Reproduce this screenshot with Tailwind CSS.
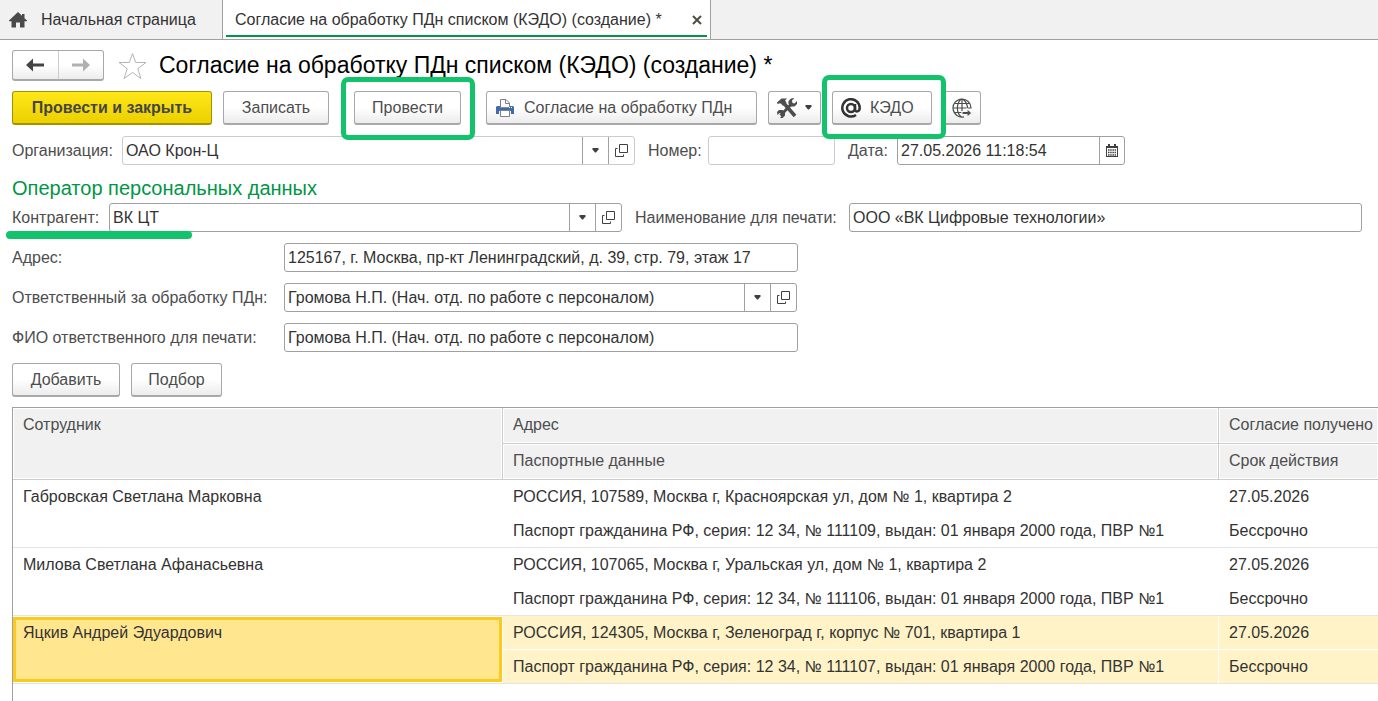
<!DOCTYPE html>
<html lang="ru">
<head>
    <meta charset="UTF-8">
    <meta name="viewport" content="width=device-width, initial-scale=1.0">
    <title>Согласие на обработку ПДн списком (КЭДО)</title>
    <script src="https://cdn.jsdelivr.net/npm/@tailwindcss/browser@4"></script>
</head>
<body class="bg-white text-[#333333] text-[16px] leading-5 font-['Liberation_Sans',Arial,sans-serif]">

    <!-- Icons shared by the combo boxes -->
    <svg class="hidden">
        <symbol id="icon-down" viewBox="0 0 7 5">
            <path d="M.5 0h6v1.500L4 4.500H3L.5 1.500z" fill="#404040"/>
        </symbol>
        <symbol id="icon-open" viewBox="0 0 13 13">
            <path d="M4.500.5h8v8h-8zM2.500 4.500h-2v8h8v-2" fill="none" stroke="#404040"/>
        </symbol>
    </svg>

    <div class="flex flex-col min-h-screen overflow-hidden">
        <!-- Open windows -->
        <nav class="flex h-10 bg-[#f1f1f1] border-b border-[#a0a0a0]">
            <a href="#" class="flex items-center w-[222px] pl-[9px]">
                <svg class="w-[18px] h-4 mr-[14px]" viewBox="0 0 18 16"><path d="M9 0l4 3.800V2h2.500v4.200L18 8.500v.7h-2.500V15.500h-4.500v-5H7v5H2.500V9.200H0v-.7z" fill="#4a4a4a"/></svg>
                Начальная страница
            </a>
            <div class="flex items-center h-10 w-[489px] pl-3 pr-1 bg-white border-x border-b border-[#a0a0a0] relative">
                <a href="#" class="whitespace-nowrap">Согласие на обработку ПДн списком (КЭДО) (создание) *</a>
                <button type="button" aria-label="Закрыть" class="ml-auto mr-1">
                    <svg class="w-[10px] h-[10px]" viewBox="0 0 10 10"><path d="M1 1l8 8M9 1L1 9" stroke="#4d4d40" stroke-width="2"/></svg>
                </button>
                <span class="absolute left-[3px] right-[3px] bottom-[2px] h-[2px] bg-[#009646]"></span>
            </div>
        </nav>

        <main class="flex flex-col grow pl-3 pt-[10px]">
            <!-- Title -->
            <div class="flex items-center h-[31px]">
                <div class="flex h-[31px] w-[92px] rounded-[3px] border border-[#a8a8a8] border-b-2 bg-linear-to-b from-white from-50% to-[#ececec]">
                    <button type="button" aria-label="Назад" class="flex-1 flex items-center justify-center border-r border-[#cccccc]">
                        <svg class="w-[18px] h-[14px]" viewBox="0 0 18 14"><path d="M0 7l7-6.500V5.500h11v3H7V13.500z" fill="#444444"/></svg>
                    </button>
                    <button type="button" aria-label="Вперед" class="flex-1 flex items-center justify-center">
                        <svg class="w-[18px] h-[14px]" viewBox="0 0 18 14"><path d="M18 7l-7-6.500V5.500H0v3h11V13.500z" fill="#b0b0b0"/></svg>
                    </button>
                </div>
                <button type="button" aria-label="В избранное" class="ml-[14px] mr-3">
                    <svg class="w-[29px] h-7" viewBox="0 0 29 28"><path d="M14.500 1.500l3.200 9h10.300l-8.200 6.200 3.100 9.800-8.400-6-8.400 6 3.100-9.800L1 10.500h10.300z" fill="none" stroke="#b4b4b4"/></svg>
                </button>
                <h1 class="text-[23px] leading-7 pb-[2px] text-black whitespace-nowrap">Согласие на обработку ПДн списком (КЭДО) (создание) *</h1>
            </div>

            <!-- Commands -->
            <div class="flex h-[34px] mt-[10px] text-[#4d4d4d]">
                <button type="button" class="w-[200px] rounded-[3px] border border-[#a39104] border-b-2 bg-linear-to-b from-[#ffe817] to-[#ecd000] font-bold text-[#454545]">Провести и закрыть</button>
                <button type="button" class="w-[106px] ml-[11px] rounded-[3px] border border-[#a8a8a8] border-b-2 bg-linear-to-b from-white from-50% to-[#ececec]">Записать</button>
                <div class="relative flex ml-[25px]">
                    <button type="button" class="w-[107px] rounded-[3px] border border-[#a8a8a8] border-b-2 bg-linear-to-b from-white from-50% to-[#ececec]">Провести</button>
                    <span class="absolute -left-[13px] -right-[14px] -top-[14px] -bottom-[15px] border-[5px] border-[#13c36c] rounded-[7px] pointer-events-none"></span>
                </div>
                <button type="button" class="w-[271px] ml-[25px] pl-[9px] flex items-center rounded-[3px] border border-[#a8a8a8] border-b-2 bg-linear-to-b from-white from-50% to-[#ececec]">
                    <svg class="w-[18px] h-[18px] mr-[10px]" viewBox="0 0 18 18">
                        <path d="M4.500 8V.5h5.500l3.500 3.500V8M9.500.5v4h4" fill="#fff" stroke="#808080"/>
                        <path d="M1 7h3v1.500h10V7h3l1 1v7h-3v-3H3v3H0V8z" fill="#3f6ca8"/>
                        <path d="M3 8.500h12V12H3z" fill="#3f6ca8"/>
                        <path d="M13 8.500h1M15 8.500h1" stroke="#fff"/>
                        <path d="M4.500 11.500h9v6h-9z" fill="#fff" stroke="#808080"/>
                    </svg>
                    Согласие на обработку ПДн
                </button>
                <button type="button" aria-label="Сервис" class="w-[53px] ml-[11px] pl-2 flex items-center rounded-[3px] border border-[#a8a8a8] border-b-2 bg-linear-to-b from-white from-50% to-[#ececec]">
                    <svg class="w-5 h-5" viewBox="0 0 20 20" fill="#4d4d4d">
                        <path d="M7.500 6l10.500 12" stroke="#4d4d4d" stroke-width="3.500"/>
                        <path d="M14.500 6L3.500 17.500" stroke="#4d4d4d" stroke-width="3"/>
                        <path d="M.5 6L0 4.500l4.500-4H10L8 2.500l1.500 2L6 8 4 5.500 2 5.500z"/>
                        <path d="M17.500 0L15 2.500l.5 2.500 2 .5L20 3v3l-2.500 2.500h-3.500L11.500 6V3L14 .5zM0 14l2-2h3.500L8 14.500v3L5.500 20H3l2-2.500L4.500 15.500 2.500 15 .5 17z"/>
                    </svg>
                    <svg class="w-[7px] h-[5px] ml-2" viewBox="0 0 7 5"><use href="#icon-down"/></svg>
                </button>
                <div class="relative z-10 flex ml-[11px]">
                    <button type="button" class="w-[100px] pl-2 flex items-center rounded-[3px] border border-[#a8a8a8] border-b-2 bg-linear-to-b from-white from-50% to-[#ececec]">
                        <svg class="w-5 h-5 mr-[9px]" viewBox="0 0 20 20" fill="none" stroke="#333333" stroke-width="2.500">
                            <circle cx="10" cy="10" r="4"/>
                            <path d="M14 6v5.500c0 3 4.700 2.500 4.700-1.500A8.700 8.700 0 1 0 15 17"/>
                        </svg>
                        КЭДО
                    </button>
                    <span class="absolute -left-[10px] -right-[14px] -top-[16px] -bottom-[14px] border-[5px] border-[#13c36c] rounded-[7px] pointer-events-none"></span>
                </div>
                <button type="button" aria-label="Отправить" class="w-[38px] ml-[11px] pl-2 flex items-center rounded-[3px] border border-[#a8a8a8] border-b-2 bg-linear-to-b from-white from-50% to-[#ececec]">
                    <svg class="w-5 h-5" viewBox="0 0 20 20" fill="none" stroke="#4d4d4d" stroke-width="1.200">
                        <path d="M12 18.800A9 9 0 1 1 19 10.500M9.500 1C4 5 4 15 9.500 19M10.500 1c3.500 2.500 5 6 5 9.500M10 1v12M1 10h18M3 5.500h14M3 14.500h7"/>
                        <path d="M10 13.500h5V10.500l5 4.500-5 4.500V16.500h-5z" fill="#4d4d4d" stroke="#f6f6f6"/>
                    </svg>
                </button>
            </div>

            <!-- Document header -->
            <div class="flex items-center mt-[11px] text-[#4d4d4d]">
                <label for="org" class="w-[110px]">Организация:</label>
                <div class="flex w-[513px] h-[29px] rounded-[3px] border border-[#cccccc]">
                    <input id="org" type="text" value="ОАО Крон-Ц" class="grow min-w-0 px-[3px] text-[#333333] outline-none">
                    <button type="button" aria-label="Выбрать организацию" class="w-[26px] flex items-center justify-center border-l border-[#a0a0a0]"><svg class="w-[7px] h-[5px]"><use href="#icon-down"/></svg></button>
                    <button type="button" aria-label="Открыть организацию" class="w-[26px] pr-px flex items-center justify-center border-l border-[#a0a0a0]"><svg class="w-[13px] h-[13px]"><use href="#icon-open"/></svg></button>
                </div>
                <label for="number" class="w-[60px] ml-[13px]">Номер:</label>
                <input id="number" type="text" class="w-[127px] h-[29px] px-[3px] rounded-[3px] border border-[#cccccc] outline-none">
                <label for="date" class="w-[49px] ml-[13px]">Дата:</label>
                <div class="flex w-[228px] h-[29px] rounded-[3px] border border-[#a0a0a0]">
                    <input id="date" type="text" value="27.05.2026 11:18:54" class="grow min-w-0 px-[3px] text-[#333333] outline-none">
                    <button type="button" aria-label="Календарь" class="w-[26px] pr-px flex items-center justify-center border-l border-[#a0a0a0]">
                        <svg class="w-3 h-[13px]" viewBox="0 0 12 13">
                            <path d="M0 2h2V0h2v2h4V0h2v2h2v11H0z" fill="#404040"/>
                            <path d="M1 4h10v8H1z" fill="#fff"/>
                            <path d="M2 6h8M2 8.500h8M2 11h8" stroke="#404040" stroke-width="1.500" stroke-dasharray="1.500 .7"/>
                        </svg>
                    </button>
                </div>
            </div>

            <h2 class="mt-[11px] h-6 leading-6 text-[20px] text-[#009646]">Оператор персональных данных</h2>

            <div class="relative flex items-center mt-[3px] pr-4 text-[#4d4d4d]">
                <label for="partner" class="w-[97px]">Контрагент:</label>
                <div class="flex w-[513px] h-[29px] rounded-[3px] border border-[#a0a0a0]">
                    <input id="partner" type="text" value="ВК ЦТ" class="grow min-w-0 px-[3px] text-[#333333] outline-none">
                    <button type="button" aria-label="Выбрать контрагента" class="w-[26px] flex items-center justify-center border-l border-[#a0a0a0]"><svg class="w-[7px] h-[5px]"><use href="#icon-down"/></svg></button>
                    <button type="button" aria-label="Открыть контрагента" class="w-[26px] pr-px flex items-center justify-center border-l border-[#a0a0a0]"><svg class="w-[13px] h-[13px]"><use href="#icon-open"/></svg></button>
                </div>
                <label for="print-name" class="w-[214px] ml-[13px] whitespace-nowrap">Наименование для печати:</label>
                <input id="print-name" type="text" value="ООО «ВК Цифровые технологии»" class="flex-1 min-w-0 h-[29px] px-[3px] rounded-[3px] border border-[#a0a0a0] text-[#333333] outline-none">
                <span class="absolute -left-[6px] top-[28px] w-[186px] h-2 rounded-full bg-[#13c36c]"></span>
            </div>

            <div class="flex items-center mt-[11px] text-[#4d4d4d]">
                <label for="address" class="w-[272px]">Адрес:</label>
                <input id="address" type="text" value="125167, г. Москва, пр-кт Ленинградский, д. 39, стр. 79, этаж 17" class="w-[514px] h-[29px] px-[3px] rounded-[3px] border border-[#a0a0a0] text-[#333333] outline-none">
            </div>
            <div class="flex items-center mt-[11px] text-[#4d4d4d]">
                <label for="responsible" class="w-[272px] whitespace-nowrap">Ответственный за обработку ПДн:</label>
                <div class="flex w-[513px] h-[29px] rounded-[3px] border border-[#a0a0a0]">
                    <input id="responsible" type="text" value="Громова Н.П. (Нач. отд. по работе с персоналом)" class="grow min-w-0 px-[3px] text-[#333333] outline-none">
                    <button type="button" aria-label="Выбрать ответственного" class="w-[26px] flex items-center justify-center border-l border-[#a0a0a0]"><svg class="w-[7px] h-[5px]"><use href="#icon-down"/></svg></button>
                    <button type="button" aria-label="Открыть ответственного" class="w-[26px] pr-px flex items-center justify-center border-l border-[#a0a0a0]"><svg class="w-[13px] h-[13px]"><use href="#icon-open"/></svg></button>
                </div>
            </div>
            <div class="flex items-center mt-[11px] text-[#4d4d4d]">
                <label for="responsible-print" class="w-[272px] whitespace-nowrap">ФИО ответственного для печати:</label>
                <input id="responsible-print" type="text" value="Громова Н.П. (Нач. отд. по работе с персоналом)" class="w-[514px] h-[29px] px-[3px] rounded-[3px] border border-[#a0a0a0] text-[#333333] outline-none">
            </div>

            <div class="flex gap-[11px] h-[34px] mt-[11px] text-[#4d4d4d]">
                <button type="button" class="w-[108px] rounded-[3px] border border-[#a8a8a8] border-b-2 bg-linear-to-b from-white from-50% to-[#ececec]">Добавить</button>
                <button type="button" class="w-[91px] rounded-[3px] border border-[#a8a8a8] border-b-2 bg-linear-to-b from-white from-50% to-[#ececec]">Подбор</button>
            </div>

            <!-- Employees -->
            <div class="grow mt-[10px] border-l border-t border-[#a0a0a0] overflow-hidden">
                <table class="w-full table-fixed border-separate border-spacing-0 text-left whitespace-nowrap">
                    <colgroup>
                        <col class="w-[490px]">
                        <col class="w-[716px]">
                        <col>
                    </colgroup>
                    <thead class="text-[#4d4d4d]">
                        <tr class="h-9">
                            <th rowspan="2" class="px-[10px] pt-[7px] align-top font-normal bg-[#f1f1f1] shadow-[inset_0_0_0_1px_#ffffff] border-r border-b border-[#cccccc]">Сотрудник</th>
                            <th class="px-[10px] pb-[2px] font-normal bg-[#f1f1f1] shadow-[inset_0_0_0_1px_#ffffff] border-r border-b border-[#cccccc]">Адрес</th>
                            <th class="pl-[10px] pb-[2px] font-normal bg-[#f1f1f1] shadow-[inset_0_0_0_1px_#ffffff] border-b border-[#cccccc] overflow-hidden">Согласие получено</th>
                        </tr>
                        <tr class="h-9">
                            <th class="px-[10px] pb-[2px] font-normal bg-[#f1f1f1] shadow-[inset_0_0_0_1px_#ffffff] border-r border-b border-[#cccccc]">Паспортные данные</th>
                            <th class="pl-[10px] pb-[2px] font-normal bg-[#f1f1f1] shadow-[inset_0_0_0_1px_#ffffff] border-b border-[#cccccc]">Срок действия</th>
                        </tr>
                    </thead>
                    <tbody>
                        <tr class="h-[34px]">
                            <td rowspan="2" class="px-[10px] pt-[7px] align-top border-b border-[#e4e4e4]">Габровская Светлана Марковна</td>
                            <td class="px-[10px]">РОССИЯ, 107589, Москва г, Красноярская ул, дом № 1, квартира 2</td>
                            <td class="pl-[10px]">27.05.2026</td>
                        </tr>
                        <tr class="h-[34px]">
                            <td class="px-[10px] border-b border-[#e4e4e4]">Паспорт гражданина РФ, серия: 12 34, № 111109, выдан: 01 января 2000 года, ПВР №1</td>
                            <td class="pl-[10px] border-b border-[#e4e4e4]">Бессрочно</td>
                        </tr>
                        <tr class="h-[34px]">
                            <td rowspan="2" class="px-[10px] pt-[7px] align-top border-b border-[#e4e4e4]">Милова Светлана Афанасьевна</td>
                            <td class="px-[10px]">РОССИЯ, 107065, Москва г, Уральская ул, дом № 1, квартира 2</td>
                            <td class="pl-[10px]">27.05.2026</td>
                        </tr>
                        <tr class="h-[34px]">
                            <td class="px-[10px] border-b border-[#e4e4e4]">Паспорт гражданина РФ, серия: 12 34, № 111106, выдан: 01 января 2000 года, ПВР №1</td>
                            <td class="pl-[10px] border-b border-[#e4e4e4]">Бессрочно</td>
                        </tr>
                        <tr class="h-[34px]">
                            <td rowspan="2" class="relative px-[10px] pt-[7px] align-top border-b border-[#e4e4e4]">
                                <span class="absolute left-0 right-px top-px bottom-px bg-[#ffe68f] border-[3px] border-[#fbca1e]"></span>
                                <span class="relative">Яцкив Андрей Эдуардович</span>
                            </td>
                            <td class="px-[10px] bg-[#fff3c7] border-r border-b border-white">РОССИЯ, 124305, Москва г, Зеленоград г, корпус № 701, квартира 1</td>
                            <td class="pl-[10px] bg-[#fff3c7] border-b border-white">27.05.2026</td>
                        </tr>
                        <tr class="h-[34px]">
                            <td class="px-[10px] bg-[#fff3c7] border-r border-b border-r-white border-b-[#e4e4e4]">Паспорт гражданина РФ, серия: 12 34, № 111107, выдан: 01 января 2000 года, ПВР №1</td>
                            <td class="pl-[10px] bg-[#fff3c7] border-b border-[#e4e4e4]">Бессрочно</td>
                        </tr>
                    </tbody>
                </table>
            </div>
        </main>
    </div>

</body>
</html>
